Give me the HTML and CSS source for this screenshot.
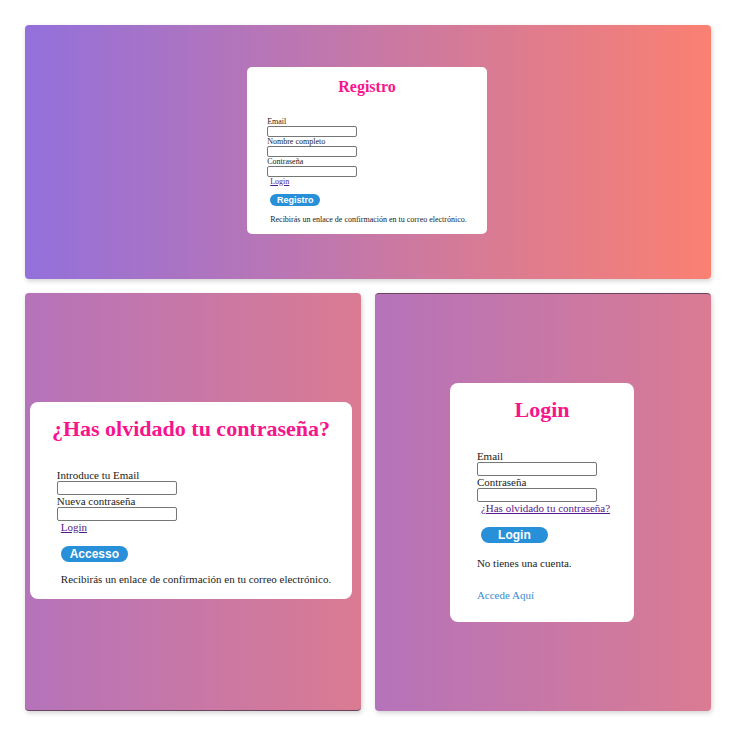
FILE: index.html
```html
<!DOCTYPE html>
<html lang="es">
<head>
  <meta charset="utf-8">
  <meta name="viewport" content="width=device-width, initial-scale=1">
  <title>Registro y Login</title>
  <link rel="stylesheet" href="styles.css">
</head>
<body>
  <main class="board">
    <section class="panel panel-wide">
      <form class="card card-small">
        <h1 class="title">Registro</h1>
        <label for="reg-email">Email</label>
        <input id="reg-email" type="email">
        <label for="reg-name">Nombre completo</label>
        <input id="reg-name" type="text">
        <label for="reg-pass">Contraseña</label>
        <input id="reg-pass" type="password">
        <a class="link" href="#login">Login</a>
        <button class="submit" type="button">Registro</button>
        <p class="note">Recibirás un enlace de confirmación en tu correo electrónico.</p>
      </form>
    </section>
    <section class="panel panel-reset">
      <form class="card">
        <h1 class="title">¿Has olvidado tu contraseña?</h1>
        <label for="reset-email">Introduce tu Email</label>
        <input id="reset-email" type="email">
        <label for="reset-pass">Nueva contraseña</label>
        <input id="reset-pass" type="password">
        <a class="link" href="#login">Login</a>
        <button class="submit" type="button">Accesso</button>
        <p class="note">Recibirás un enlace de confirmación en tu correo electrónico.</p>
      </form>
    </section>
    <section class="panel panel-login" id="login">
      <form class="card card-login">
        <h1 class="title">Login</h1>
        <label for="login-email">Email</label>
        <input id="login-email" type="email">
        <label for="login-pass">Contraseña</label>
        <input id="login-pass" type="password">
        <a class="link" href="#reset">¿Has olvidado tu contraseña?</a>
        <button class="submit" type="button">Login</button>
        <p class="question">No tienes una cuenta.</p>
        <a class="signup" href="#registro">Accede Aquí</a>
      </form>
    </section>
  </main>
</body>
</html>
```
FILE: styles.css
```css
* {
  box-sizing: border-box;
}

body {
  margin: 0;
  background: #fff;
  color: #222;
  font-family: "Liberation Serif", "Times New Roman", serif;
}

.board {
  display: grid;
  grid-template-columns: 1fr 1fr;
  grid-template-rows: 254fr 418fr;
  gap: 14px;
  min-height: 100vh;
  padding: 25px;
}

.panel {
  display: flex;
  align-items: center;
  justify-content: center;
  border-radius: 4px;
  background: linear-gradient(to right, #b573ba, #da7b92);
  box-shadow: 1px 2px 5px rgba(0, 0, 0, 0.18);
}

.panel-wide {
  grid-column: 1 / -1;
  padding: 0 2px 4px 0;
  background: linear-gradient(to right, mediumpurple, salmon);
}

.panel-reset {
  padding: 0 4px 2px 0;
  border-bottom: 1px solid #6b4560;
}

.panel-login {
  padding-right: 2px;
  border-top: 1px solid #6b4560;
}

.card {
  display: flex;
  flex-direction: column;
  align-items: flex-start;
  padding: 14px 27px 13px;
  border-radius: 8px;
  background: #fff;
  font-size: 11px;
  line-height: 13px;
  white-space: nowrap;
}

.title {
  align-self: center;
  margin: 0 -5px 27px;
  color: #f7148c;
  font-size: 22px;
  line-height: 26px;
}

.card label {
  line-height: 12px;
}

.card input {
  width: 120px;
  height: 14px;
  padding: 0 2px;
  border: 1px solid #767676;
  border-radius: 2px;
  background: #fff;
  font-size: 10px;
}

.link {
  margin: 0 -3px 0 4px;
  color: #551a8b;
}

.submit {
  width: 67px;
  height: 16px;
  margin: 12px 0 0 4px;
  padding: 0;
  border: 0;
  border-radius: 8px;
  background: #288fd9;
  color: #fff;
  font: bold 12px/16px "Liberation Sans", Arial, sans-serif;
}

.note {
  margin: 11px -6px 0 4px;
}

.question {
  margin: 14px 0 19px;
}

.signup {
  color: #3a8bd0;
  text-decoration: none;
}

.card-login {
  padding-bottom: 20px;
}

.card-small {
  padding: 11px 20px 10px;
  border-radius: 5px;
  font-size: 8px;
  line-height: 9px;
}

.card-small .title {
  margin-bottom: 21px;
  font-size: 16px;
  line-height: 18px;
}

.card-small label {
  line-height: 9px;
}

.card-small input {
  width: 90px;
  height: 11px;
  font-size: 8px;
}

.card-small .link {
  margin-left: 3px;
}

.card-small .submit {
  width: 50px;
  height: 12px;
  margin: 8px 0 0 3px;
  font-size: 9px;
  line-height: 12px;
}

.card-small .note {
  margin: 9px 0 0 3px;
}
```
